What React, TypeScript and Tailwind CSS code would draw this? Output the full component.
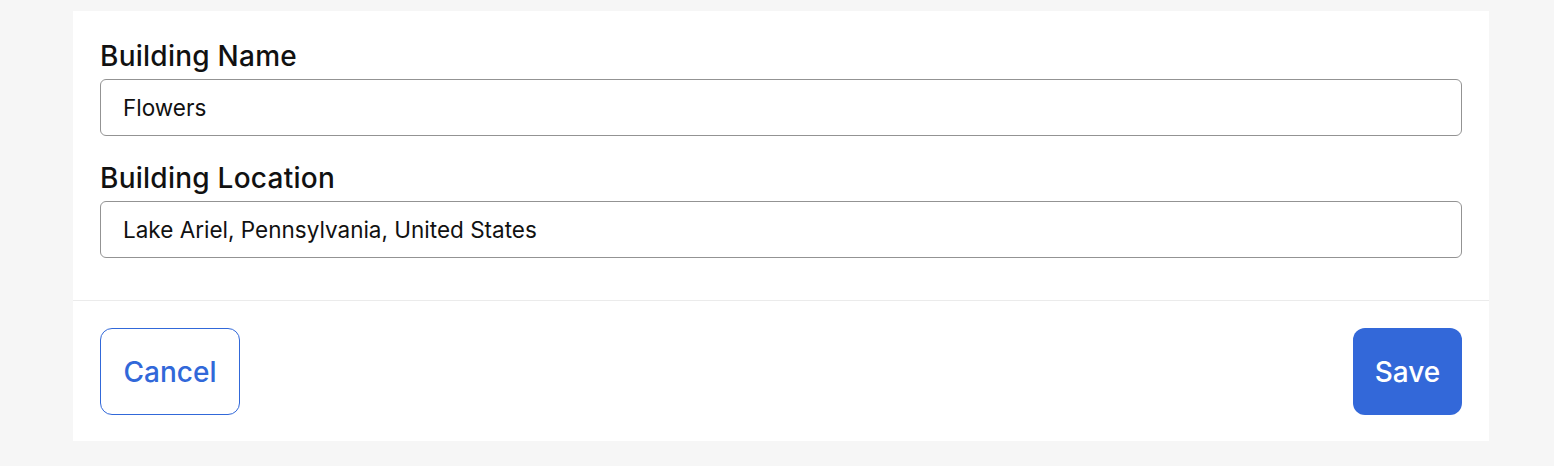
export default function App() {
  return (
    <div className="min-h-[466px] bg-[#f6f6f6] pt-[11px] pl-[73px] pr-[65px]" style={{ fontFamily: 'Inter, "Noto Sans", sans-serif' }}>
      <div className="bg-white">
        <div className="px-[27px] pt-[29px] pb-[42px] flex flex-col">
          <label className="text-[28px] leading-[32px] font-medium text-[#111] tracking-[0.25px]">Building Name</label>
          <div className="mt-[7px] h-[57px] border border-[#939393] rounded-[6px] flex items-center px-[22px] text-[22.5px] text-[#111]">Flowers</div>
          <label className="mt-[26px] text-[28px] leading-[32px] font-medium text-[#111] tracking-[0.25px]">Building Location</label>
          <div className="mt-[7px] h-[57px] border border-[#939393] rounded-[6px] flex items-center px-[22px] text-[22.5px] text-[#111]">Lake Ariel, Pennsylvania, United States</div>
        </div>
        <div className="border-t border-[#ebebeb] px-[27px] pt-[27px] pb-[26px] flex justify-between">
          <button className="h-[87px] w-[140px] border border-[#3168d9] rounded-[12px] text-[#3168d9] text-[28px] font-medium">Cancel</button>
          <button className="h-[87px] w-[109px] bg-[#3368d9] rounded-[12px] text-white text-[28px] font-medium">Save</button>
        </div>
      </div>
    </div>
  );
}
